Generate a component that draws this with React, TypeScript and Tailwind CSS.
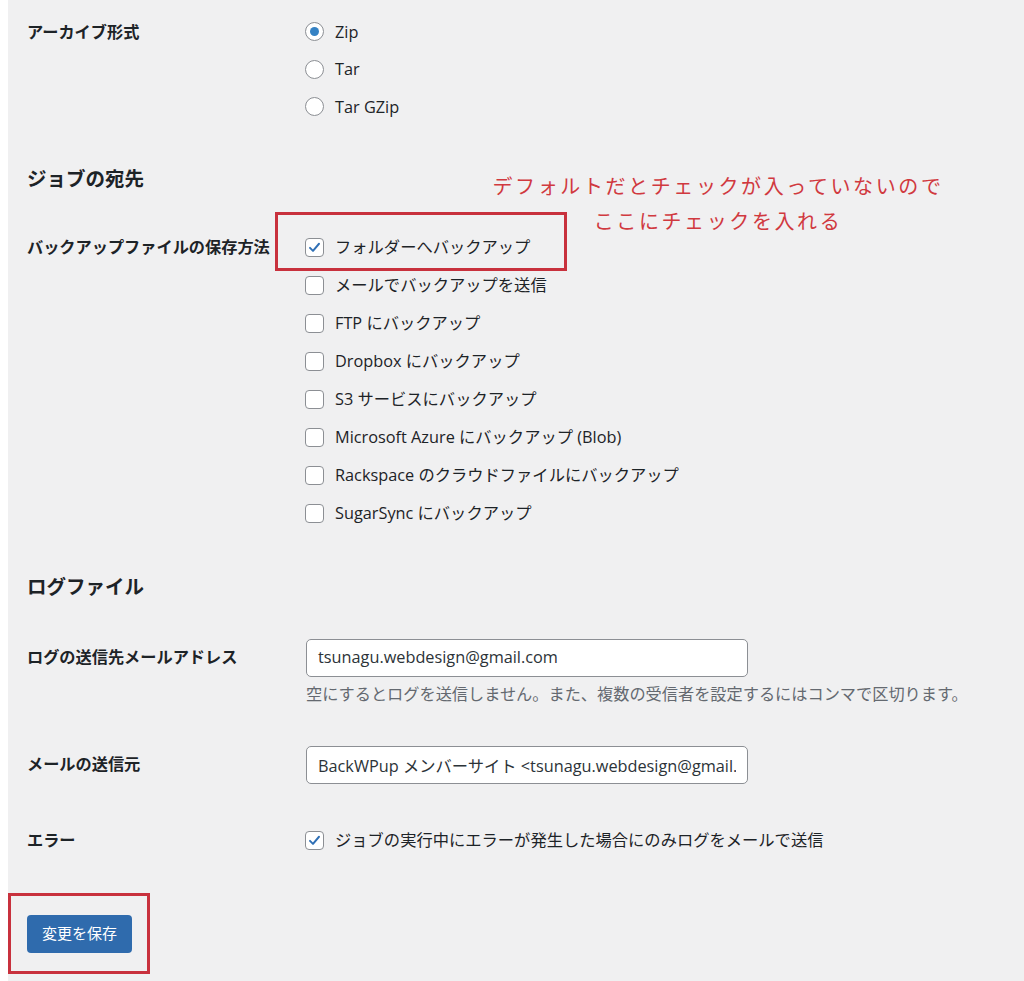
import React from 'react';

const font = "font-['Open_Sans','Noto_Sans_CJK_JP',sans-serif]";

const Radio: React.FC<{ checked?: boolean; label: string }> = ({ checked, label }) => (
  <div className="h-[37.5px] flex items-center">
    <span className="w-[19px] h-[19px] rounded-full border border-[#8c8f94] bg-white flex items-center justify-center shrink-0">
      {checked && <span className="w-[9px] h-[9px] rounded-full bg-[#3582c4]" />}
    </span>
    <span className="ml-[11px] text-[16.3px] text-[#1d2327]">{label}</span>
  </div>
);

const Checkbox: React.FC<{ checked?: boolean }> = ({ checked }) => (
  <span className="w-[19px] h-[19px] rounded-[4px] border border-[#8c8f94] bg-white flex items-center justify-center shrink-0">
    {checked && (
      <svg width="15" height="15" viewBox="0 0 20 20">
        <path d="M4 10.5 L8 14.5 L16 5" fill="none" stroke="#2f6fb5" strokeWidth="2.6" strokeLinecap="round" strokeLinejoin="round" />
      </svg>
    )}
  </span>
);

const CheckRow: React.FC<{ checked?: boolean; label: string }> = ({ checked, label }) => (
  <div className="h-[38px] flex items-center">
    <Checkbox checked={checked} />
    <span className="ml-[11px] text-[16.3px] text-[#1d2327] whitespace-nowrap">{label}</span>
  </div>
);

const destinations = [
  'メールでバックアップを送信',
  'FTP にバックアップ',
  'Dropbox にバックアップ',
  'S3 サービスにバックアップ',
  'Microsoft Azure にバックアップ (Blob)',
  'Rackspace のクラウドファイルにバックアップ',
  'SugarSync にバックアップ',
];

export default function App() {
  return (
    <div className={`relative min-h-[981px] bg-[#f0f0f1] border-l-8 border-white pl-[19px] text-[#1d2327] ${font}`}>
      {/* archive format */}
      <div className="grid grid-cols-[278px_1fr] pt-[13px]">
        <div className="h-[37.5px] flex items-center font-bold text-[16.2px]">アーカイブ形式</div>
        <div className="flex flex-col">
          <Radio checked label="Zip" />
          <Radio label="Tar" />
          <Radio label="Tar GZip" />
        </div>
      </div>

      <h2 className="mt-[39px] h-[28px] leading-[28px] text-[19.5px] font-bold">ジョブの宛先</h2>

      <div className="grid grid-cols-[278px_1fr] mt-[36px]">
        <div className="h-[38px] flex items-center font-bold text-[16.2px] whitespace-nowrap">バックアップファイルの保存方法</div>
        <div className="flex flex-col">
          <CheckRow checked label="フォルダーへバックアップ" />
          {destinations.map((d) => (
            <CheckRow key={d} label={d} />
          ))}
        </div>
      </div>

      <h2 className="mt-[40px] h-[28px] leading-[28px] text-[19.5px] font-bold">ログファイル</h2>

      <div className="grid grid-cols-[279px_1fr] mt-[38px]">
        <div className="h-[38px] flex items-center font-bold text-[16.2px]">ログの送信先メールアドレス</div>
        <div>
          <div className="w-[442px] h-[38px] bg-white border border-[#8c8f94] rounded-[5px] flex items-center px-[11px] text-[16.3px] text-[#2c3338]">
            tsunagu.webdesign@gmail.com
          </div>
          <p className="mt-[6px] leading-[22px] text-[16.2px] text-[#646970] whitespace-nowrap">
            空にするとログを送信しません。また、複数の受信者を設定するにはコンマで区切ります。
          </p>
        </div>
      </div>

      <div className="grid grid-cols-[279px_1fr] mt-[41px]">
        <div className="h-[38px] flex items-center font-bold text-[16.2px]">メールの送信元</div>
        <input
          readOnly
          value="BackWPup メンバーサイト <tsunagu.webdesign@gmail.com>"
          className="w-[442px] h-[38px] bg-white border border-[#8c8f94] rounded-[5px] px-[11px] text-[16.3px] text-[#2c3338] outline-none"
        />
      </div>

      <div className="grid grid-cols-[278px_1fr] mt-[38px]">
        <div className="h-[38px] flex items-center font-bold text-[16.2px]">エラー</div>
        <CheckRow checked label="ジョブの実行中にエラーが発生した場合にのみログをメールで送信" />
      </div>

      <div className="mt-[55px] pb-[29px]">
        <button className="h-[38px] px-[15px] rounded-[4px] bg-[#2f6bad] text-white text-[15px]">変更を保存</button>
      </div>

      {/* annotations */}
      <div className="absolute left-[482px] top-[169px] w-[456px] text-center text-[20px] leading-[35px] tracking-[2.6px] text-[#d0393f]">
        <div>デフォルトだとチェックが入っていないので</div>
        <div>ここにチェックを入れる</div>
      </div>
      <div className="absolute left-[267px] top-[212px] w-[292px] h-[59px] border-[3px] border-[#c8313d]" />
      <div className="absolute left-0 top-[893px] w-[142px] h-[81px] border-[3px] border-[#c8313d]" />
    </div>
  );
}
